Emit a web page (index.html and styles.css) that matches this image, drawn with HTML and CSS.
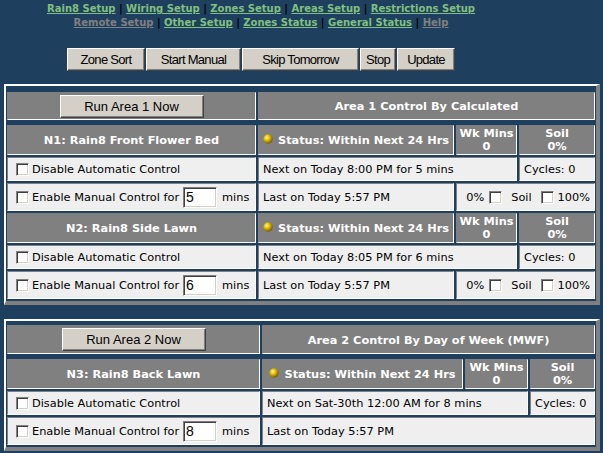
FILE: index.html
```html
<!DOCTYPE html>
<html lang="en">
<head>
    <meta charset="UTF-8">
    <title>Rain8 Zones Status</title>
    <link rel="stylesheet" href="styles.css">
</head>
<body>

<div class="top">
    <div class="nav">
        <div>
            <a href="#">Rain8 Setup</a> | <a href="#">Wiring Setup</a> | <a href="#">Zones Setup</a> | <a href="#">Areas Setup</a> | <a href="#">Restrictions Setup</a>
        </div>
        <div>
            <a href="#" class="off">Remote Setup</a> | <a href="#">Other Setup</a> | <a href="#">Zones Status</a> | <a href="#">General Status</a> | <a href="#" class="off">Help</a>
        </div>
    </div>

    <div class="toolbar">
        <button type="button" class="btn btn-sort">Zone Sort</button>
        <button type="button" class="btn btn-manual">Start Manual</button>
        <button type="button" class="btn btn-skip">Skip Tomorrow</button>
        <button type="button" class="btn btn-stop">Stop</button>
        <button type="button" class="btn btn-update">Update</button>
    </div>
</div>

<!-- area 1 -->
<div class="area area-1">
    <div class="area-head">
        <div class="cell dark"><button type="button" class="btn btn-run">Run Area 1 Now</button></div>
        <div class="cell dark bold">Area 1 Control By Calculated</div>
    </div>

    <div class="zone">
        <div class="cell dark bold">N1: Rain8 Front Flower Bed</div>
        <div class="cell dark bold">
            <svg class="dot" viewBox="0 0 10 10"><defs><radialGradient id="g1" cx="38%" cy="35%" r="65%"><stop offset="0" stop-color="#fff6a0"/><stop offset="0.45" stop-color="#e2bd00"/><stop offset="1" stop-color="#7a5c00"/></radialGradient></defs><circle cx="5" cy="5" r="4.7" fill="url(#g1)"/></svg>
            <span>Status: Within Next 24 Hrs</span>
        </div>
        <div class="cell dark bold stack">Wk Mins<br>0</div>
        <div class="cell dark bold stack">Soil<br>0%</div>

        <div class="cell light"><input type="checkbox" class="cb"><span>Disable Automatic Control</span></div>
        <div class="cell light span-2">Next on Today 8:00 PM for 5 mins</div>
        <div class="cell light">Cycles: 0</div>

        <div class="cell light"><input type="checkbox" class="cb"><span>Enable Manual Control for</span><input type="text" class="mins" value="5"><span>mins</span></div>
        <div class="cell light">Last on Today 5:57 PM</div>
        <div class="cell light span-2 soil"><span>0%</span><input type="checkbox" class="cb cb-low"><span>Soil</span><input type="checkbox" class="cb cb-high"><span>100%</span></div>
    </div>

    <div class="zone">
        <div class="cell dark bold">N2: Rain8 Side Lawn</div>
        <div class="cell dark bold">
            <svg class="dot" viewBox="0 0 10 10"><defs><radialGradient id="g2" cx="38%" cy="35%" r="65%"><stop offset="0" stop-color="#fff6a0"/><stop offset="0.45" stop-color="#e2bd00"/><stop offset="1" stop-color="#7a5c00"/></radialGradient></defs><circle cx="5" cy="5" r="4.7" fill="url(#g2)"/></svg>
            <span>Status: Within Next 24 Hrs</span>
        </div>
        <div class="cell dark bold stack">Wk Mins<br>0</div>
        <div class="cell dark bold stack">Soil<br>0%</div>

        <div class="cell light"><input type="checkbox" class="cb"><span>Disable Automatic Control</span></div>
        <div class="cell light span-2">Next on Today 8:05 PM for 6 mins</div>
        <div class="cell light">Cycles: 0</div>

        <div class="cell light"><input type="checkbox" class="cb"><span>Enable Manual Control for</span><input type="text" class="mins" value="6"><span>mins</span></div>
        <div class="cell light">Last on Today 5:57 PM</div>
        <div class="cell light span-2 soil"><span>0%</span><input type="checkbox" class="cb cb-low"><span>Soil</span><input type="checkbox" class="cb cb-high"><span>100%</span></div>
    </div>
</div>

<!-- area 2 -->
<div class="area area-2">
    <div class="area-head">
        <div class="cell dark"><button type="button" class="btn btn-run">Run Area 2 Now</button></div>
        <div class="cell dark bold">Area 2 Control By Day of Week (MWF)</div>
    </div>

    <div class="zone">
        <div class="cell dark bold">N3: Rain8 Back Lawn</div>
        <div class="cell dark bold">
            <svg class="dot" viewBox="0 0 10 10"><defs><radialGradient id="g3" cx="38%" cy="35%" r="65%"><stop offset="0" stop-color="#fff6a0"/><stop offset="0.45" stop-color="#e2bd00"/><stop offset="1" stop-color="#7a5c00"/></radialGradient></defs><circle cx="5" cy="5" r="4.7" fill="url(#g3)"/></svg>
            <span>Status: Within Next 24 Hrs</span>
        </div>
        <div class="cell dark bold stack">Wk Mins<br>0</div>
        <div class="cell dark bold stack">Soil<br>0%</div>

        <div class="cell light"><input type="checkbox" class="cb"><span>Disable Automatic Control</span></div>
        <div class="cell light span-2">Next on Sat-30th 12:00 AM for 8 mins</div>
        <div class="cell light">Cycles: 0</div>

        <div class="cell light"><input type="checkbox" class="cb"><span>Enable Manual Control for</span><input type="text" class="mins" value="8"><span>mins</span></div>
        <div class="cell light span-3">Last on Today 5:57 PM</div>
    </div>
</div>

</body>
</html>
```

FILE: styles.css
```css
body {
    margin: 0;
    background-color: #1f3f5f;
    font-family: "DejaVu Sans", Verdana, sans-serif;
    font-size: 11.33px;
    color: #000;
}
.top {
    width: 522px;
    text-align: center;
}
.nav {
    padding-top: 2px;
    font-size: 10px;
    font-weight: bold;
    line-height: 14px;
    color: #000;
}
.nav a {
    color: #80c080;
    text-decoration: underline;
}
.nav a.off {
    color: #808080;
}
.toolbar {
    display: flex;
    justify-content: center;
    gap: 1px;
    margin-top: 18px;
}
.btn {
    height: 23px;
    padding: 0;
    background-color: #d4d0c8;
    border: 1px solid;
    border-color: #fff #404040 #404040 #fff;
    box-shadow: inset -1px -1px #808080;
    font-family: "Liberation Sans", Arial, sans-serif;
    font-size: 13px;
    color: #000;
}
.toolbar .btn {
    letter-spacing: -0.7px;
}
.btn-sort { width: 78px; }
.btn-manual { width: 95px; }
.btn-skip { width: 117px; }
.btn-stop { width: 36px; }
.btn-update { width: 58px; }
.btn-run { width: 144px; }

.area {
    width: 596px;
    box-sizing: border-box;
    margin-left: 4px;
    border-style: solid;
    border-width: 2px 4px 4px 2px;
    border-color: #fff #808080 #808080 #fff;
    padding: 6px 1px 2px 1px;
}
.area-1 {
    margin-top: 13px;
    --cols: 249px 196px 61px 1fr;
    --left: 249px;
    --head: 28px;
}
.area-2 {
    margin-top: 14px;
    padding-top: 4px;
    --cols: 253px 201px 63px 1fr;
    --left: 253px;
    --head: 29px;
}
.area-head {
    display: grid;
    grid-template-columns: var(--left) 1fr;
    grid-template-rows: var(--head);
    column-gap: 2px;
    margin-bottom: 5px;
}
.zone {
    display: grid;
    grid-template-columns: var(--cols);
    grid-template-rows: 30px 24px 28px;
    gap: 2px;
}
.zone + .zone {
    margin-top: 2px;
}
.cell {
    display: flex;
    align-items: center;
    box-sizing: border-box;
    padding: 0 4px;
    border: 1px solid;
    border-color: #808080 #fff #fff #808080;
    white-space: nowrap;
}
.dark {
    background-color: #808080;
    color: #fff;
    justify-content: center;
    text-align: center;
}
.light {
    background-color: #efefef;
}
.bold {
    font-weight: bold;
}
.stack {
    line-height: 13px;
}
.span-2 {
    grid-column: span 2;
}
.span-3 {
    grid-column: span 3;
}
.soil {
    justify-content: flex-end;
}
.dot {
    width: 10px;
    height: 10px;
    margin: 0 5px 3px 0;
}
.cb {
    appearance: none;
    width: 13px;
    height: 13px;
    margin: 0 3px 0 4px;
    box-sizing: border-box;
    border: 1px solid;
    border-color: #808080 #fff #fff #808080;
    box-shadow: inset 1px 1px #404040, inset -1px -1px #d4d0c8;
    background-color: #fff;
}
.cb-low {
    margin: 0 9px 0 5px;
}
.cb-high {
    margin: 0 4px 0 9px;
}
.mins {
    appearance: none;
    width: 34px;
    height: 21px;
    box-sizing: border-box;
    margin: 0 5px 0 4px;
    padding: 0 2px;
    border: 1px solid;
    border-color: #808080 #fff #fff #808080;
    box-shadow: inset 1px 1px #404040, inset -1px -1px #d4d0c8;
    background-color: #fff;
    font-family: "Liberation Sans", Arial, sans-serif;
    font-size: 14px;
    color: #000;
}
```
